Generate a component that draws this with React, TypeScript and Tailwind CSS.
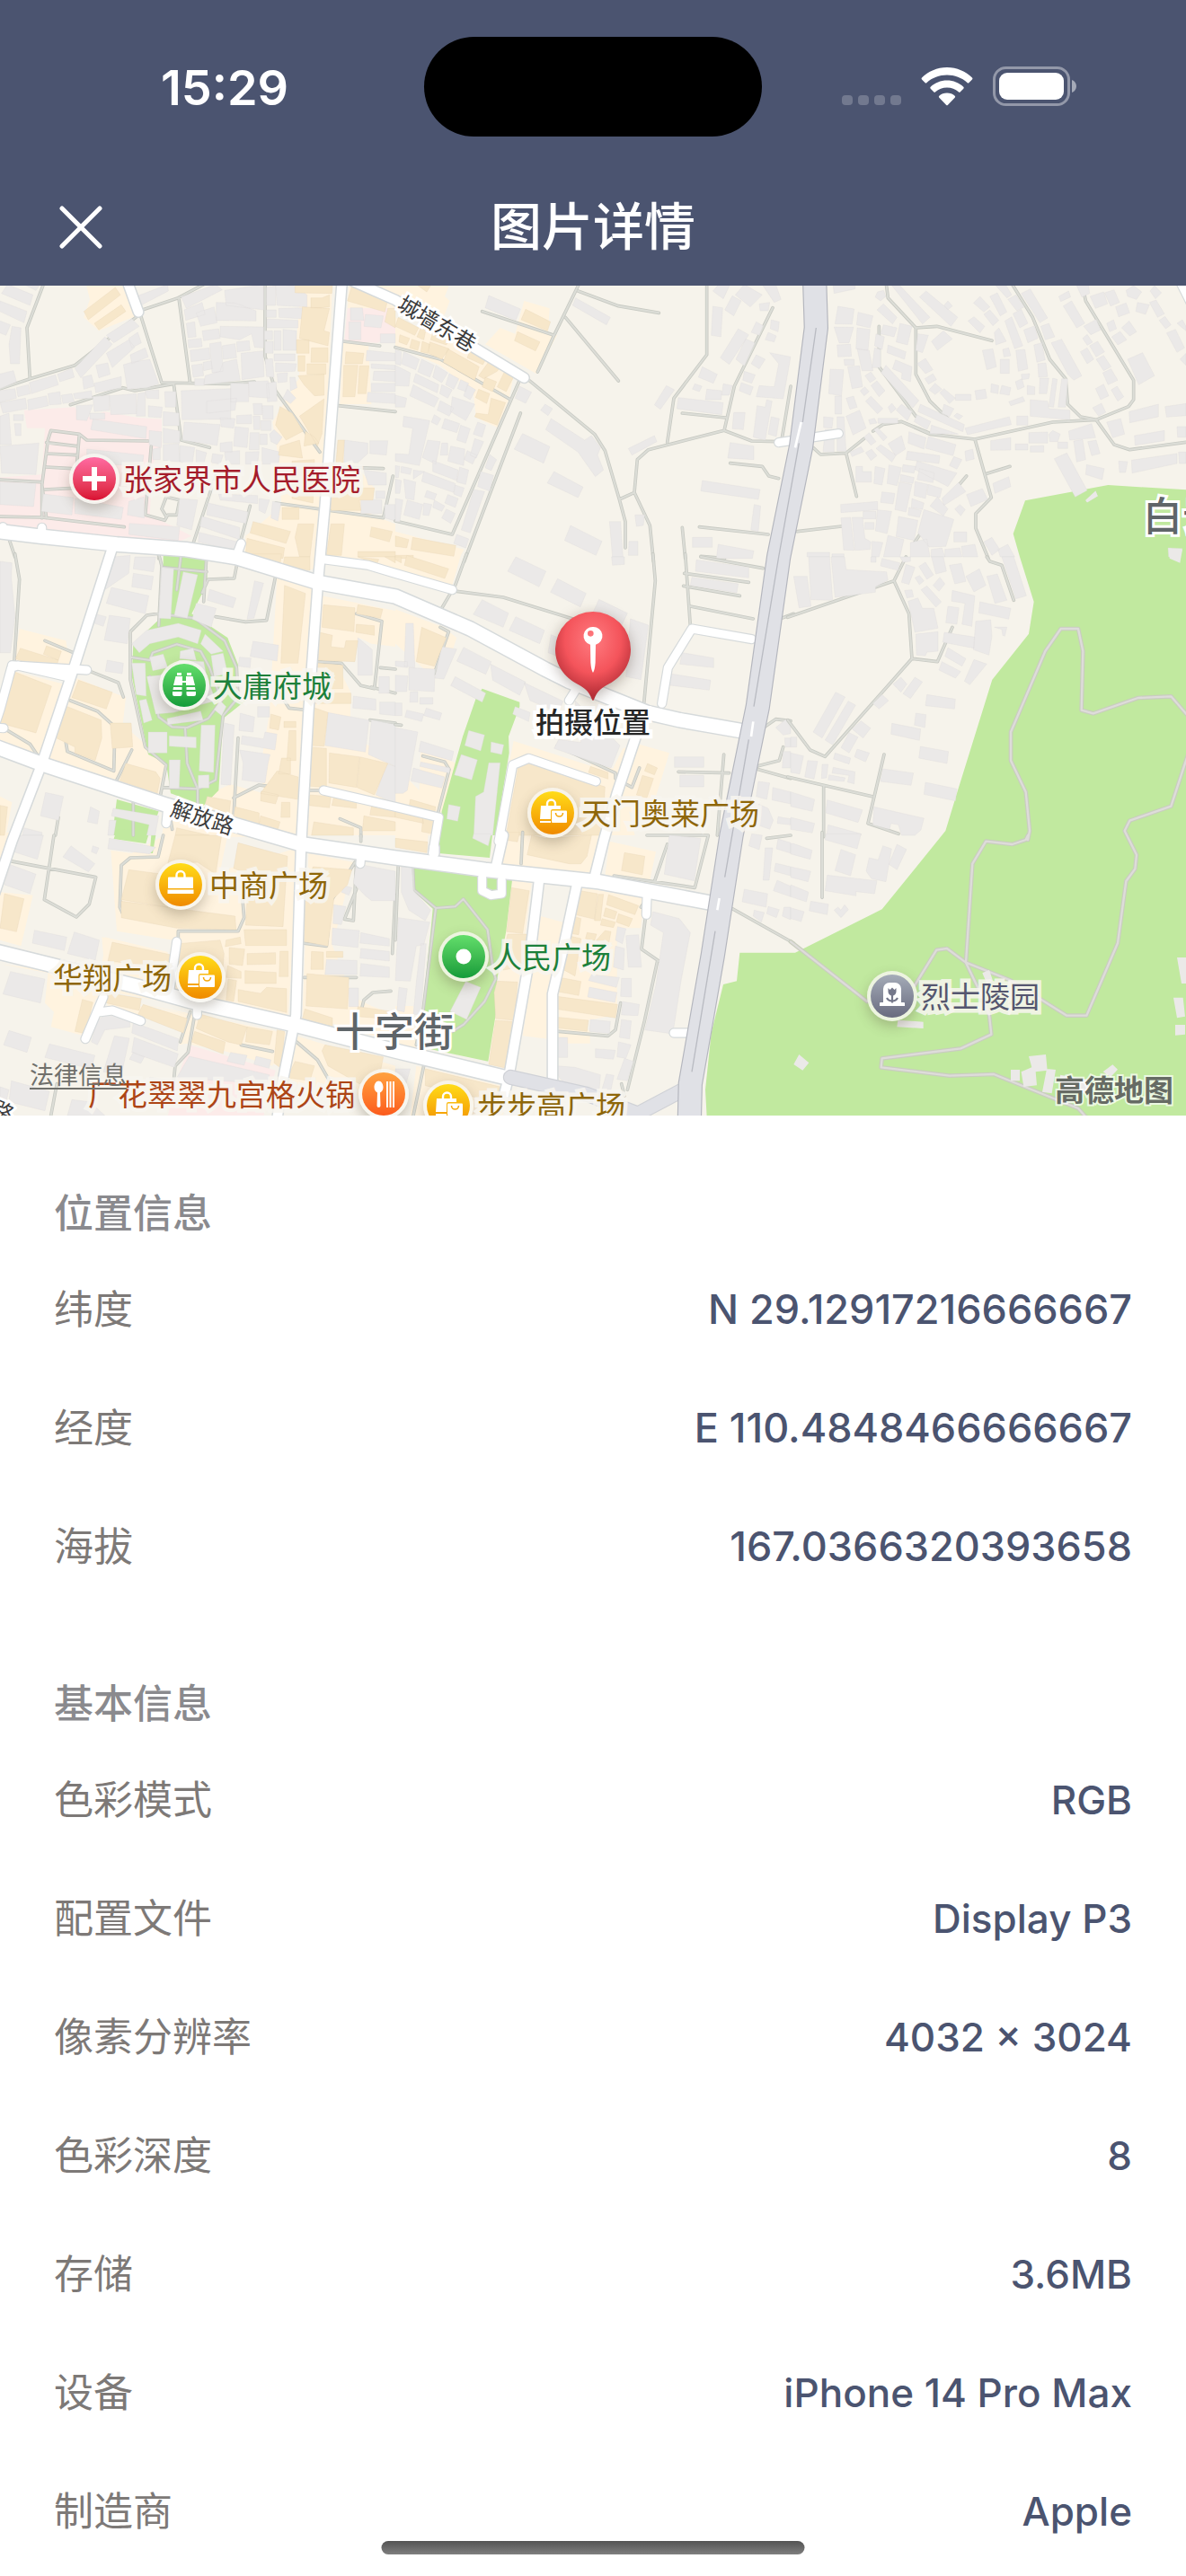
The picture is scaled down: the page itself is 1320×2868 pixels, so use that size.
import type { ReactNode } from "react";

const sections = [
  {
    title: "位置信息",
    valueSize: "text-[45px]",
    rows: [
      ["纬度", "N 29.12917216666667"],
      ["经度", "E 110.4848466666667"],
      ["海拔", "167.0366320393658"],
    ],
  },
  {
    title: "基本信息",
    valueSize: "text-[44px]",
    rows: [
      ["色彩模式", "RGB"],
      ["配置文件", "Display P3"],
      ["像素分辨率", "4032 × 3024"],
      ["色彩深度", "8"],
      ["存储", "3.6MB"],
      ["设备", "iPhone 14 Pro Max"],
      ["制造商", "Apple"],
    ],
  },
];

type Tile = {
  x: number;
  y: number;
  shops?: string;
  hospital?: string;
  park?: string;
  lanes: string;
  houses: string;
  stores?: string;
};

// the map is cut in nine tiles of 1320 x 930 units, each with its own origin
const tiles: Tile[] = [
  {
    x: 0,
    y: 0,
    shops:
      "M985,10H1110L1075,930H815L820,860 940,760 930,600 910,480 1000,330 990,200 1000,100Z M1165,10H1320V100H1160Z M285,10H410L455,125 330,175 280,130 300,70Z M1145,215H1230L1240,420H1135Z M1130,540H1150L1180,620 1210,650 1250,700 1240,790 1320,820V930H1085Z",
    hospital:
      "M80,440 250,430 270,470 350,445 460,465 540,470 540,560 510,620 500,790 640,860 600,878 -10,835V665L140,655 150,500 90,500Z M1160,100H1320V185L1260,215 1150,210Z",
    lanes:
      "M145,20 90,165 100,335 M-10,372 100,335 250,290 460,125 M460,110 595,65 680,20 M470,125 540,348 M597,65 635,350 M540,348 760,352 850,345 M235,422 410,365 450,375 580,352 605,540 700,565 M885,20V260L920,375 1068,580 M1145,210 1268,225 M1130,425 1320,445 M155,800 140,690 160,540 170,508 265,520 290,540 495,543 M265,520 250,700 150,705 M155,548 255,560 M155,585 255,590 M155,630 240,635 M-10,672 135,680 M140,690V800 M-10,795 140,798 415,830 M505,560 485,790 550,808 560,790 590,790 600,740 555,730 540,770 555,795 M720,660 645,885 M835,760 805,870 M920,750 1280,800 1312,660 M1150,630 1280,635 M30,870 50,930 M530,920V935",
    houses:
      "M25,20 110,55 100,90 5,50Z M0,75 90,110 80,148 -5,108Z M80,20 130,25 120,40Z M-5,140 35,155 20,190 -5,180Z M40,160 70,165 65,285 35,285 30,220Z M-5,320 45,308 55,345 -5,370Z M-5,375 50,368 55,400 -5,415Z M55,365 95,355 102,385 60,395Z M98,348 185,322 195,355 105,385Z M192,320 240,300 248,330 200,345Z M0,415 85,400 90,435 10,450Z M92,405 155,392 162,425 95,440Z M160,385 200,378 205,420 165,422Z M205,390 240,385 248,412 210,418Z M250,300 350,195 375,220 270,332Z M355,190 440,135 465,160 380,215Z M355,250 430,205 450,230 375,298Z M430,200 460,180 472,215 440,232Z M435,255 485,232 495,262 440,285Z M320,290 360,282 368,320 330,332Z M275,330 305,322 315,360 280,370Z M315,350 405,328 405,365 320,382Z M245,385 305,375 308,400 250,402Z M412,288 440,280 500,270 530,352 490,365 425,370Z M310,395 365,390V440L315,445Z M365,392 455,385V452L370,455Z M460,385 485,380V460H455Z M485,375 530,372V402L490,400Z M495,425 542,430 538,465 495,462Z M255,425 310,422 290,475 255,472Z M550,378H587V430H552Z M545,445 598,450V492H545Z M545,500 600,510V550H545Z M310,470 490,495 487,535 303,505Z M300,450H350V470H300Z M498,508 540,512 538,565 498,555Z M545,555 597,552 600,612 545,608Z M600,558 650,565 642,620 600,612Z M605,375 770,368V470L608,472Z M690,410 790,400 785,440 690,450Z M770,350 830,352V412H770Z M830,345 895,342 900,400 832,395Z M845,418H875V455H848Z M875,425H912V470H878Z M790,458 840,455V485H790Z M845,460H868V505H848Z M870,475H905V508H872Z M735,465 785,468 780,500 738,495Z M615,480 735,488 725,558 610,540Z M785,495 830,500 825,565 780,560Z M835,515H865V572H832Z M868,520H892V555H868Z M900,520 915,505 942,530 925,555 905,545Z M735,550 775,545V580L735,578Z M450,62 560,20 562,42 460,95Z M605,62 720,20 742,38 622,100Z M615,105 675,80 685,120 620,140Z M655,115 715,95 725,148 670,160Z M750,40 880,20V105L755,90Z M722,80 785,82 855,108V142L722,140Z M622,150 650,145 655,195 628,198Z M628,205 672,200 675,228 630,232Z M675,175 730,168 735,200 680,208Z M735,160 880,162V232L850,230 840,185 800,205 735,195Z M635,240 698,232 702,270 638,278Z M700,218 738,212 745,310 708,315Z M742,225 785,218 790,265 745,270Z M790,212 832,208 835,240 792,245Z M805,250 878,242 882,328 808,338Z M640,290 675,285 680,325 645,330Z M678,280 705,275 710,302 680,308Z M745,280 790,270 802,340 680,355 685,325 735,310Z M650,335H682V358H650Z M890,30 920,25V90H890Z M920,20 980,25 1025,55V95L925,90Z M930,100 1010,98V135L932,130Z M890,105H922V130H890Z M892,135 995,140V165H892Z M883,175H910V205H883Z M915,175H938V240H915Z M945,170 990,175V240H945Z M885,210H912V250H885Z M915,252H985V275H915Z M885,270 910,268 915,330 890,328Z M920,282 990,285 985,310 920,312Z M925,318 960,315 958,345 928,348Z M968,330H985L992,365 970,375Z M890,350 922,345 925,410 893,412Z M960,370 988,400 970,418 945,400Z M290,570 480,590 475,625 380,622 290,600Z M0,560 130,550 120,655 5,650Z M0,460 30,450 38,555 0,555Z M48,485H70V525H52Z M45,455H78V475H45Z M0,680 120,685 112,762 0,755Z M145,720 245,732 240,790 138,778Z M250,735 412,765 405,805 250,785Z M430,745 480,730 482,800 425,790Z M432,818 600,830 595,875 430,855Z M600,735 660,740 640,840 590,825Z M510,570 535,565V605H510Z M655,572 690,582 680,620 655,615Z M710,585 745,590 735,620 705,615Z M750,580 800,575V620H755Z M820,580 865,578 860,620H820Z M875,565 935,580 930,620H875Z M695,750 828,780 820,818 690,790Z M675,795 800,832 800,872 668,828Z M665,848 795,880 790,910 662,880Z M730,720 860,725V752L735,740Z M865,735 900,740 885,785 865,775Z M910,745 938,750 928,810 905,800Z M1170,98H1210L1215,140H1170Z M1220,120 1280,125 1272,165 1215,160Z M1165,145H1205V205H1165Z M1270,185H1320V215H1270Z M1225,240 1320,250V275H1222Z M1240,285 1320,290V305L1240,300Z M1248,310H1320V345L1245,340Z M1240,350H1320V378H1240Z M1228,380 1320,385V418L1225,412Z M1150,540 1228,550V585L1195,615H1148Z M1235,542H1295L1290,590 1235,585Z M1215,640 1290,650V690L1230,690Z M1205,735 1275,740V785H1205Z M1255,710H1285V735H1255Z M1285,755H1320V810L1285,800Z",
    stores:
      "M985,20 1110,24 1108,50 985,48Z M1038,65H1075L1100,55V95L1070,98H1038Z M1010,95 1100,100 1082,175 1100,180 1095,225 1000,200Z M990,205H1032V250H990Z M1040,232H1095V280H1038Z M995,258H1018V310H995Z M1025,285H1088V320H1025Z M995,325 1082,320V390L1050,392 1015,355Z M1000,460 1082,402 1075,520 1060,560Z M935,428 975,450 1012,510 955,540 920,490Z M1020,510 1050,530 1065,550 1015,560Z M935,560 1000,540 1010,600 930,590Z M280,110 385,30 402,55 295,138Z M315,150 405,88 420,110 330,172Z M1175,24 1295,70 1285,112 1160,75Z M1295,100H1320V165L1285,145Z M1155,245 1215,250 1210,285H1152Z M1148,290H1195L1185,395H1145Z M1200,292H1232L1222,385H1195Z M1128,540H1150L1145,615H1122Z M1180,700H1250L1245,740H1200L1205,775H1105V730Z M975,610 1050,605 1045,750 975,735Z M942,765H998V805H942Z M845,812 970,845 955,885 835,850Z M825,868 950,900 945,935 820,920Z M995,820H1048L1035,930H1000L985,865Z M1105,820H1150L1140,925H1090Z M1240,830 1310,845 1300,880 1235,862Z M1195,912H1320V930H1195Z",
  },
  {
    x: 1320,
    y: 0,
    shops:
      "M0,10H185L165,60 182,75 165,120 100,140 0,70Z M430,75 515,100 510,180 540,190 470,318 300,220 350,165 400,185Z M0,130 300,260 400,300 380,400 345,500 270,465 260,380 150,290 0,225Z M0,845 230,905 215,930H0Z",
    lanes:
      "M615,15 530,190 475,312 M610,42 745,92 880,115 M568,130 745,342 M290,110 530,190 M1040,10V255L930,400 908,548 M440,335 665,520 700,575 748,738 768,812V900 M748,738 798,715 808,605 845,572 1098,508 1190,543 1280,545 M798,715 850,825 862,945 M1260,98 1132,360 1098,508 M958,450 1102,465 M1118,617 1225,628 1247,660 1280,668 M1015,830 1245,855 M958,832 968,935 M415,340 190,855 0,810 M418,450 230,945 M0,230 150,270 385,405 M1020,928 1100,935 M1320,360 1290,540",
    houses:
      "M312,57 418,102 402,140 300,98Z M602,65 718,130 705,155 592,90Z M1060,93 1093,98 1087,195 1055,190Z M1125,58 1155,75 1130,125 1100,105Z M1165,20 1225,55 1185,95 1135,55Z M1085,15H1120L1095,68 1060,42Z M1225,20H1270L1288,70 1265,80Z M1215,85 1250,80 1245,108H1218Z M1145,168 1180,188 1115,287 1085,265Z M1170,202 1200,215 1165,292 1137,270Z M1205,145 1228,158 1215,190 1188,180Z M1255,138 1282,145 1278,178 1252,168Z M1245,180 1272,192 1265,212 1235,205Z M1205,255 1235,270 1215,302 1188,285Z M1250,248 1320,262 1295,402 1205,395 1215,358 1265,362 1280,285Z M1165,310 1202,322 1190,350 1160,340Z M1155,348 1195,362 1185,390 1148,375Z M1025,295 1075,320 1062,350 1012,330Z M905,358 932,372 885,437 865,422Z M1000,352 1024,360 1015,378 992,370Z M945,398 1095,415 1090,455 940,435Z M1040,370 1090,375 1088,405H1035Z M1095,352 1125,358 1115,390H1090Z M1130,448H1168L1162,505 1125,502Z M1208,425 1235,430 1240,405 1258,410 1235,540 1195,530Z M1255,462 1282,468 1272,528 1245,520Z M865,525 873,545 790,590 778,568Z M520,468 632,540 655,525 685,565 675,590 695,640 668,662 610,580 502,505Z M425,518 516,562 495,617 397,570Z M530,645 627,697 610,732 507,683Z M585,825 690,878 670,925 565,875Z M715,812H752L760,930H725Z M780,878H810V925H778Z M800,790H832L828,825 805,828Z M1118,548 1197,560V605L1110,600Z M1025,675 1218,705 1212,738 1020,710Z M1198,755 1220,760 1212,845 1187,840Z M992,865H1058V898H992Z M1078,888 1197,910 1192,935H1072Z M415,360 455,380 435,417 400,400Z M500,420 525,435 510,458 485,440Z M0,238 20,245 18,290 0,285Z M28,245 80,270 68,305 20,285Z M88,270 130,290 115,330 75,312Z M135,290 175,315 155,348 125,330Z M180,318 212,335 195,370 168,355Z M0,290 50,315 45,360 0,358Z M68,318 145,355 140,382 60,345Z M60,355 145,400 130,430 48,392Z M155,355 190,372 175,400 148,385Z M218,338 245,350 235,378 208,368Z M240,355 268,372 250,405 228,392Z M190,395 265,420 235,475 185,445Z M150,408 195,432 180,460 140,440Z M0,390 38,400 32,430 0,430Z M28,460 115,475 80,625 0,610V585L45,588 58,500 25,495Z M130,455 152,468 140,490 120,480Z M165,468 215,485 205,515 155,500Z M218,490 250,502 235,550 205,540Z M108,540 150,545 135,620 90,598Z M155,550H175V590H150Z M185,560 232,570 228,625 175,610Z M275,480 302,490 290,530 260,520Z M265,535 295,545 270,600 250,590Z M240,575 272,590 258,620 230,605Z M125,608 210,640 205,675 125,645Z M215,630 245,640 235,688 205,680Z M95,645 200,685 195,715 88,678Z M60,640 98,645 60,670Z M20,628 55,635 50,655 18,648Z M0,625 15,628 10,665H0Z M0,670 20,675 15,718H0Z M28,670 68,680 62,740 35,735Z M200,690 230,700 220,730 195,720Z M105,708 138,720 130,740 98,730Z M175,722 210,735 200,765 165,750Z M0,735 25,740 15,812H0Z M40,740 92,755 80,805 28,790Z M95,750 122,755 112,792 92,790Z M130,740 165,760 155,778 125,765Z M170,770 200,785 185,818 155,800Z M315,588 338,605 320,642 300,632Z M285,645 328,658 315,710 275,695Z M262,705 298,712 250,850 220,840Z M205,855 245,870 235,900 195,885Z",
    stores:
      "M435,103 518,145 508,175 420,138Z M408,178 483,212 468,242 398,208Z M70,20H120L105,45Z M175,235 280,295 265,340 160,280Z M370,300 402,315 370,378 340,362Z M320,400 368,415 340,490 265,462 270,450 310,455Z M278,370 315,385 305,418 268,398Z M300,330 338,345 325,378 290,362Z M318,270 355,288 340,310 295,335 278,325Z M115,212 180,235 155,270 110,250Z M10,130 78,165 65,190 0,160Z M85,165 102,172 95,205 72,195Z M55,203 82,212 75,240 48,232Z M15,188 48,200 38,222 12,212Z M90,210 115,220 108,250 85,245Z M125,180 180,208 170,222 118,205Z M248,245 302,270 292,288 240,265Z M0,860 45,872 38,900 0,895Z M58,865 202,892 195,928 52,905Z M0,925H60V935H0Z",
  },
  {
    x: 2640,
    y: 0,
    lanes:
      "M318,10 325,65 418,165 488,160 672,208 M418,165V320L465,410 525,468 M740,20 808,130 865,270 918,335 925,420 968,462 1020,472 1128,428 1145,405V340L985,75 980,50 M75,565 100,588 185,583 245,535 M185,583 220,728 M275,510 310,487 370,478 465,520 615,537 875,480 1020,472 1080,555 1132,572 1320,547 M615,537 670,732 618,785V835L660,935 M655,652 732,628 M295,160V295L418,460 M560,692 587,660 M22,845 170,828 M415,880 438,845 M370,478 460,515",
    houses:
      "M142,24H215V35L145,50Z M290,45 310,40 318,60 300,75 282,62Z M158,93 212,102 205,153 148,152Z M225,113 275,125 265,165 220,155Z M145,162 210,163 195,215 162,215Z M222,165 265,170 258,240 218,235Z M155,222 200,220 203,260 158,262Z M222,235 262,240 275,308 238,308Z M178,270H212V290H180Z M190,295 230,292 240,362 205,368Z M132,303 177,305 170,392 127,385Z M148,393H170V453H148Z M185,400 210,393 222,430 198,437Z M110,462 142,465 138,500 110,498Z M155,462H178L185,577H155Z M115,505H145V580H108Z M185,460 230,440 252,500 208,523Z M310,85 355,130 340,152 288,105Z M310,155 355,165 345,195 300,185Z M365,150 405,160 390,222 352,212Z M285,185 313,195 305,238 280,225Z M280,232 300,238V298H272Z M325,222 385,245 380,270 322,248Z M350,272 405,295 400,345 370,335 372,315 340,302Z M248,325 268,312 285,335 265,348Z M268,358 288,342 315,375 295,395Z M232,375 248,362 262,378 245,392Z M250,410 268,393 308,435 290,452Z M318,290 428,408 408,432 302,315Z M338,24H365L465,130 440,152Z M452,42 558,130 535,160 430,62Z M512,90 525,75 540,92 525,105Z M610,82 632,60 665,95 645,112Z M592,142 612,128 648,160 632,182Z M645,120 665,105 695,140 675,158Z M665,60 690,48 722,112 700,125Z M685,24H720L738,55 722,65Z M725,70 752,55 780,95 755,108Z M770,50 800,35 858,132 832,148Z M742,118 770,103 792,150 765,165Z M715,142 738,128 775,225 748,235Z M778,172 815,158 825,200 792,215Z M835,160 862,150 882,195 850,205Z M425,185 460,190 440,248 418,240Z M470,210 510,175 540,202 490,240Z M680,180 695,165 720,210 685,222Z M640,240 675,235 687,295 655,305Z M708,237 728,232 735,258 712,262Z M700,270H730V317H700Z M752,240 782,237 792,302 760,310Z M812,222 838,215 850,272 822,280Z M825,285 852,282 858,328 828,330Z M770,320 798,318 795,335 772,338Z M750,345 772,335 780,362 758,372Z M670,352 695,358 692,385 668,380Z M705,357 735,365 730,390 698,385Z M615,375 650,370 655,400 620,405Z M550,387H602V407H550Z M790,357 815,362V388H790Z M832,333H862L855,385H830Z M728,412 775,395 782,410 735,425Z M800,405 858,410 862,435 932,440V472L855,465 800,460Z M875,333 890,337 878,430 862,428Z M905,335H925L918,430H893Z M870,215 905,203 972,325 945,340 925,320Z M422,285 450,267 475,305 450,318Z M448,335 475,318 487,338 460,353Z M462,372 482,350 505,370 482,388Z M498,382 512,368 550,400 530,418Z M433,420 580,488 575,512 425,445Z M512,420 545,435 530,462 505,450Z M325,430 338,417 352,435 335,450Z M352,440 370,420 405,445 390,475Z M412,478 422,455 468,478 455,505Z M470,490 560,520 465,518Z M582,500 730,462 737,488 590,522Z M545,460 555,450 575,460 562,472Z M755,460H792V490H755Z M292,467H358V484H292Z M260,472 280,467 288,483 265,487Z M278,505 290,498 322,530 310,543Z M245,530 262,515 285,545 268,557Z M325,552 370,525 383,570 350,592Z M395,512 452,532 445,570 392,550Z M460,528 552,555 542,592 450,567Z M250,582 270,570 288,592 268,608Z M285,568 300,555 352,590 338,613Z M198,580 235,562 245,578 205,595Z M390,577 498,592 495,618 385,605Z M668,542 735,532V573L668,574Z M795,515 858,513V550H795Z M750,553H792V573H750Z M862,520 875,508 900,520 892,545 865,545Z M800,560 845,558V580H800Z M892,547H925V568H892Z M928,510 1005,485 1018,532 932,540Z M945,543 975,538 985,605 955,613Z M992,545 1020,540 1033,585 1005,592Z M880,602 922,583 990,708 950,730Z M985,740 1018,710 1025,727 990,748Z M988,622 1047,635 1040,672 985,655Z M218,628H240V645H270V680H218Z M282,628 315,635 305,690 278,685Z M328,623 370,632 355,692 322,685Z M375,622 418,628 412,650 372,645Z M422,610 555,650 525,695 415,638Z M430,635 480,650 475,682 422,672Z M368,655 412,665 408,685 365,678Z M362,680 405,688 385,780 348,772Z M415,678 458,688 450,735 412,725Z M460,688 505,702 498,732 455,722Z M582,577 608,570 613,603 585,610Z M545,595 572,605 555,637 530,625Z M505,735 560,682 585,712 512,758Z M587,722 640,702 658,738 602,762Z M675,685 728,662 735,695 682,718Z M465,760 490,730 525,770 510,793Z M548,770 565,755 583,772 568,793Z M405,735 445,750 440,772 403,765Z M395,765 437,775 430,798 392,790Z M305,713 348,718 342,753 300,748Z M167,755 290,745V773L168,782Z M290,773 337,778 322,852 283,843Z M242,778H285V803H242Z M248,815H278V838H248Z M360,795 425,808 412,875 352,862Z M445,772 545,805 518,895 462,897 425,850Z M168,800 200,798 212,908 177,907Z M205,798H240L248,868 268,880 265,905 215,908Z M545,847H588V880H545Z M325,858 378,872 365,930H310Z M400,882 455,870 465,930H400Z M470,905 505,900 515,930H468Z M515,905 565,900 572,930H515Z M570,895 615,888 625,930H575Z M645,880 672,865 698,905 672,925Z M692,905 725,888 748,930H700Z M272,878 308,882 295,930H270Z M55,915H130V930H55Z M138,920H178V930H138Z M895,60 928,42 935,62 902,77Z M910,92 938,75 982,150 955,165Z M955,24H995L998,50 972,62Z M1000,60 1045,45 1058,85 1018,100Z M1048,48 1080,38 1098,80 1068,92Z M1085,95 1120,82 1132,115 1095,128Z M1120,40 1145,24 1172,45 1155,70 1125,60Z M1158,80 1198,88 1185,120 1152,110Z M1198,80 1220,72 1248,118 1225,130Z M1200,42 1215,24 1238,48 1218,68Z M1230,140 1250,127 1270,155 1252,168Z M1255,182 1285,170 1315,232 1290,247Z M978,160 1020,137 1035,172 1002,188Z M1055,150 1078,138 1088,168 1065,178Z M1105,165 1130,142 1155,178 1132,192Z M1072,195 1100,177 1122,205 1092,222Z M975,200 990,187 1008,213 990,223Z M998,225 1025,210 1048,245 1020,262Z M967,245 990,232 1012,270 990,285Z M1020,270 1045,257 1070,295 1045,308Z M1042,315 1070,302 1092,340 1060,355Z M1018,368 1045,353 1062,392 1035,405Z M1070,372 1090,360 1112,395 1092,410Z M1008,432 1038,417 1052,447 1028,460Z M1125,270 1175,248 1215,325 1162,355Z M1130,445 1228,420V462L1132,482Z M1250,428 1320,418V458L1255,463Z M1055,480 1102,468 1115,520 1075,532Z M1148,525 1248,508V542L1150,557Z M1290,495H1320V530H1292Z M1095,610 1125,612 1118,648H1098Z M1138,607 1290,585V618L1140,650Z M1295,580H1320V618H1298Z M1290,150 1308,138 1320,160V175Z M1300,270 1320,250V290Z M1260,900 1308,902 1300,930H1262Z",
  },
  {
    x: 0,
    y: 930,
    shops:
      "M65,240 220,280 225,310 240,330 215,400 45,360Z M40,380 215,425 140,670 0,615V520Z M255,405 420,470 410,560 560,690 530,800 375,745 165,675Z M925,65 1045,95 1010,930H690L700,790 770,760 880,790 870,700 900,520Z M1075,130 1320,180V300L1240,290 1200,270 1130,370 1170,450 1170,600 1020,520Z M1035,520 1320,680V930H1025Z M550,870 1000,935H540Z M0,800 40,820 20,930H0Z M700,-10 950,60 1050,40 1060,-10Z M1100,-10H1320V40Z",
    park:
      "M545,-10H690L692,90 640,190 760,270 795,360 790,470 820,480 745,540 730,780 680,830 570,790 555,690 495,660 470,540 440,400 445,290 530,210 545,20Z M390,810 530,850 500,930H375Z",
    lanes:
      "M530,-10 540,30 530,230 M540,35 690,50 M605,-10 590,110 M690,-10 680,150 M790,30 782,72 695,75 675,120 M435,335V250L490,195 540,188 570,195 650,205 750,280 790,370 795,470 745,530 720,745 660,775 545,770 M435,335V410L485,635 555,695 535,800 M435,335 500,345 510,320 590,292 670,315 700,370 740,480 695,540 625,570 575,568 530,535 500,400 M618,570 625,690 660,775V830 M150,280 245,320 M295,380 395,420 412,468 M50,-10 65,75 48,345 M235,480 325,515 375,560 M220,620 225,650 380,715 382,640 M440,645 390,745 M0,565 100,625 130,670 M720,200 820,217 890,212 920,65 M1190,190 1275,215 1250,440 1205,430 1140,355 1060,350 M1320,375 1270,370 M1240,435 1320,455 M930,450 965,505 1010,510 M795,605 780,870 M780,805 865,762 925,770 M1030,780H1080 M1135,875 1205,905V935 M445,820V930 M195,870 185,930 M575,910 570,880 M1235,545 1320,555",
    houses:
      "M0,15 40,20 38,70 50,200 35,320 0,320Z M380,0 435,-5 430,55 350,110Z M450,0H520L512,50 445,40Z M445,55 512,65 505,110 440,100Z M372,102 497,130 485,190 355,155Z M365,195 435,205 425,290 348,278Z M315,190 355,200 345,232 310,220Z M358,345 412,355 408,390 352,382Z M540,35 580,40 570,207 530,205Z M612,50 660,60 625,205 582,195Z M655,155 722,172 705,235 642,208Z M440,290 490,245 595,222 672,245 660,290 595,268 500,290 465,320Z M670,290 685,258 745,315 705,325Z M705,330 745,322 760,390 715,400Z M602,315 645,305 655,345 600,340Z M500,335 545,325 560,370 510,380Z M440,355 485,355 488,465 455,460Z M490,400 535,395 600,345 680,350 690,400 720,480 580,520 520,525Z M465,480 488,475 508,545 480,555Z M558,540 670,515 678,545 560,560Z M715,510 735,480 755,500 740,530Z M495,585H558V655H495Z M565,598 655,602V638L565,632Z M672,562 718,562 713,720 665,715Z M565,678H602L598,773H565Z M662,730 698,728V772H662Z M748,555 782,562 770,762 738,760Z M590,810 600,800 625,830Z M700,108 788,138 778,170 692,145Z M850,80 880,88 848,205 825,208Z M845,282 930,295 925,348 835,332Z M800,335 838,338 835,370 795,365Z M802,522 850,535 845,585 798,580Z M860,500H900V535H860Z M885,585 925,592 918,645 805,625 808,598 880,608Z M800,645 902,660 895,690 885,755 808,745 812,690Z M1195,270 1243,310V395H1195Z M1265,400H1300V455H1265Z M1180,465 1255,475V512L1178,505Z M1268,485H1320V530L1268,525Z M1095,520 1232,545 1220,652 1085,630Z M1240,545 1320,560V700L1230,660Z M1290,690 1320,700V825L1255,795Z M152,787 212,800 195,880 135,865Z M302,835 332,850 325,892 292,885Z M378,840 530,865 518,930H490L498,895 372,865Z M365,880H388L380,930H360Z M80,905 140,920V930H75Z",
    stores:
      "M68,305 195,345 180,390 52,340Z M155,297 205,315 195,345 145,325Z M50,385 172,432 120,588 0,555Z M262,412 375,452 355,508 240,470Z M212,495 338,545 340,605 318,680 250,655V635L178,600Z M368,555H438L443,635 375,640Z M420,690 520,718 535,740 525,790 400,748Z M950,95 1020,122 995,355H938Z M1080,160 1185,170 1182,250 1075,235Z M1195,160 1278,175 1270,205 1190,190Z M1190,225 1250,230V262L1188,252Z M1058,250 1110,262 1105,300 1150,305 1155,280 1195,280 1185,350 1058,345Z M1060,355 1145,362V440H1060Z M905,525 938,535 930,578 900,572Z M948,550H988V570H948Z M965,580H988V680H958Z M940,672H970V725H930Z M925,715 995,735V810L870,790Z M940,820H968V870H938Z M872,782 930,795 920,825 870,815Z M692,800 770,815 765,860 685,825Z M785,835 865,855V895L780,875Z M870,865 935,885 928,910 865,895Z M1045,455H1172V490H1040Z M1038,500 1095,520 1082,632 1035,630Z M1035,635 1090,640V770L1025,765Z M1100,655 1200,668 1190,770 1098,755Z M1202,668 1295,690 1250,795 1192,770Z M1115,800 1190,812V840L1108,830Z M1030,795 1105,800 1100,838 1030,830Z M1048,885 1180,905V930H1040Z M1240,835 1320,845V870L1235,862Z M1215,865 1320,885V915H1210Z M0,830 25,835 15,930H0Z M590,905 700,930H585Z M950,0H1035V45L945,30Z M830,-10H940L935,28Z M1195,0 1265,8 1258,25Z M1285,0H1320V20Z",
  },
  {
    x: 1320,
    y: 930,
    shops:
      "M0,-10H220L190,95 0,40Z M0,175 160,235 205,270 185,330 120,395 0,290Z M395,615 720,720 760,640 810,625 915,655 870,800 820,870 780,850 800,930H370L380,690Z M85,640 205,690 150,865 0,830V700L80,780Z M0,840 140,870V930H0Z M650,690 740,710 700,790Z",
    park: "M290,440 415,485 415,500 378,600 380,655 335,930H150L155,850 225,600 270,470Z",
    lanes:
      "M238,-10 200,95 150,180 M205,115 360,135 595,208 660,235 M860,-10 868,80 830,490 M968,-10 985,230 M965,55 1180,85 M962,97 1150,130 M985,165 1195,207 M1020,0 1228,38 M150,235 178,250 130,390 M540,632 735,722 735,740 790,770 815,705 M92,665 165,685 180,710 140,865 M945,718 1115,722 M1097,660 1075,930 M1290,205 1330,190 M1230,570 1270,542 1320,548 M1205,700 1282,680 1295,635 M1205,708 1320,740 M415,905 480,910 M0,560 20,562",
    houses:
      "M402,0 503,48 480,100 375,48Z M542,73 637,122 618,167 518,118Z M680,142 775,188 755,230 660,185Z M290,143 378,188 360,235 260,192Z M402,200 498,245 482,290 380,245Z M520,260 590,290 590,350 510,320Z M785,207 845,228 820,410 770,400Z M722,0H765V25L725,28Z M1005,10 1180,35V70L1002,48Z M990,68 1145,90 1140,120 985,95Z M958,320 1063,338V370L950,358Z M918,390 1053,412 1048,445 910,428Z M932,668H1030V703H932Z M950,730H1030V768H950Z M35,222H60L65,370 30,365Z M155,300 205,308 162,408 132,405Z M228,302 320,350 302,392 205,348Z M318,358 435,418 415,462 325,412Z M430,420 560,482 545,520 450,480Z M200,400 302,455 290,485 185,430Z M0,348 40,350V370L0,365Z M45,370 132,375 130,450 45,445Z M0,395 42,398 38,450H0Z M50,450H75V485H48Z M82,470H125V492H82Z M0,488H22V530H0Z M38,512 95,525 88,550 32,535Z M103,505 155,522 148,545 95,530Z M0,570 75,585 40,780 25,790H0Z M85,615 195,650 188,680 78,650Z M60,705 165,735 155,772 52,748Z M85,685 182,705 180,722 82,700Z M400,500 450,520 445,550 392,525Z M600,480 750,630 720,705 530,640 545,610 620,620Z M245,580 298,595 285,648 232,630Z M320,618 362,628 355,660 318,652Z M220,660 274,678 255,745 197,728Z M312,688H350L325,930H262L268,800 295,785Z M178,827 217,835 208,883 172,875Z M1270,570 1305,542 1320,560V590L1295,595Z M1295,650H1320V705H1292Z M1300,605H1320V635H1302Z M1212,750 1250,755 1240,810 1205,800Z M1260,770 1320,785V825L1258,812Z M1278,868 1320,875V895L1275,890Z M1200,820 1245,840 1262,880 1250,910 1195,890Z",
    stores:
      "M38,-5 178,40 165,72 30,28Z M0,0H20V20L0,10Z M88,235 170,270 130,365 70,350Z M415,678 700,768 692,930H370Z M652,700 710,720V742L645,720Z M842,690 875,705 865,728 832,715Z M825,730 862,740 840,805 805,795Z M50,810 135,835 130,865 45,838Z M0,850 90,868 95,890 0,870Z M92,870 132,870 125,925 88,918Z",
  },
  {
    x: 2640,
    y: 930,
    lanes:
      "M-10,202 345,80 385,0 M345,80 395,190 405,340 490,350 540,235 M405,340 115,667 65,645 -10,545 M655,0 665,15 705,28 745,145 M-10,735 272,800 M312,660 258,890 360,925 M110,765V935",
    houses:
      "M10,65H55L68,165 28,170Z M60,0H130L140,145 68,143Z M135,0H180L185,42 228,45 320,50 325,78 283,100V118L190,130 148,135Z M305,5 365,20 358,45 300,30Z M365,0H400V15L375,18Z M268,0H285V18H268Z M385,25 415,35 395,92 370,85Z M428,32 450,18 477,60 455,75Z M470,0H510L520,48 485,57Z M415,70 430,62 445,80 430,93Z M380,112 405,110 410,133 388,137Z M475,95 498,68 515,90 495,115Z M435,110 455,97 503,150 485,168Z M530,28 570,22 585,82 548,90Z M585,65 630,40 652,95 612,117Z M655,65 690,57 722,145 682,155Z M705,0H745L787,130 752,140Z M632,150 735,172 728,208 628,187Z M540,112 615,130 605,232 572,225 582,155 537,148Z M525,165 562,170 555,225 518,220Z M392,148 425,137 440,172 478,172 492,238 415,252Z M418,258 492,250V315L455,318 450,330 420,328Z M513,252 615,268 612,305 508,285Z M618,215 668,210 672,265 662,328 610,310Z M680,235H722L715,265 708,262 705,242Z M525,303 585,340 572,365 515,332Z M505,350 568,383 550,405 495,378Z M612,343 655,358 598,427 580,415Z M415,402 440,418 400,473 375,457Z M342,425 368,402 388,425 368,452Z M275,490 305,460 327,480 295,508Z M150,452 182,468 105,605 75,585Z M192,482 217,495 140,628 115,612Z M455,460 550,475 547,508 450,497Z M338,556 434,575 430,613 335,592Z M418,522 452,527 448,570 413,562Z M433,633 527,650 522,690 428,672Z M450,753 555,775 550,815 445,793Z M308,708 410,722 402,763 300,750Z M205,575 235,548 267,572 242,605Z M195,587 225,602 195,655 168,637Z M148,655 200,672 195,692 143,675Z M222,642 263,655 250,685 213,668Z M0,602H20V635H0Z M0,655 43,665 30,725 0,720Z M57,680 90,683 78,742 47,735Z M105,693H125L120,738 103,740Z M142,703 215,718 212,758 190,752 195,730 138,722Z M128,728 182,738 178,750 125,745Z M122,812 240,845 225,887 117,855Z M0,785 80,810 72,850 0,833Z M0,870 80,890 72,922 0,910Z M278,835 445,873 435,912 415,930H370L360,895 335,890 330,910 275,895Z M125,895 235,925V930H120Z",
  },
  {
    x: 0,
    y: 1860,
    shops:
      "M0,190 110,200 70,370 0,350Z M370,50 440,60 550,0H760L735,120 1000,40 960,630 350,520 380,420 575,400 580,350 390,320Z M0,430 160,460 150,560 180,590 170,640 280,670 320,545 640,600 600,700 650,690 910,770 950,660 360,590 350,340 560,390 570,560 330,500 230,460Z M1030,60 1180,90 1110,370 1180,540 1240,570 1320,600V690L1010,600Z M990,670 1320,770V830L1200,870 940,820Z M0,-10H40L20,80 0,90Z M340,340 560,390 560,440 330,500 345,400Z M360,540 640,600 600,690 640,700 760,720 930,770 955,660Z",
    hospital: "M630,700 920,785 880,936H560L600,790Z",
    park: "M390,-20 500,-15 487,28 380,12Z M505,0H520L510,60H500Z",
    lanes:
      "M180,0 148,215 255,273 298,230 320,140 30,85 M545,0 528,72 435,75 405,100 400,240 410,262 M595,350V320H795L815,275 810,215 M1185,90 1105,220 1090,370 1010,360 M1190,180 1150,280 1180,285 1190,90 M1015,475H1190 M1205,590 1215,550 1245,525 1305,520 M1310,395 1320,200 M650,600 628,725 585,770 580,820 M635,590 602,690 M805,700 910,722 M990,690 1060,750 1100,820 M190,830 170,936 M1205,0V20",
    houses:
      "M60,0H145L125,80 45,55Z M237,35 317,95 295,122 210,72Z M310,35 330,42 322,62 305,55Z M35,98 120,130 100,195 15,165Z M365,10 520,40 500,62 360,45Z M115,317 223,340 215,385 108,360Z M248,323 332,350 318,418 225,395Z M35,455 150,480 135,560 10,530Z M30,652 105,675 90,725 12,700Z M165,697 317,735 305,780 150,742Z M350,600 430,605 435,640 350,650 325,700 305,690 325,620Z M445,625 597,680 592,720 440,660Z M382,670 432,678 405,800 345,790Z M448,675 595,730 582,775 440,725Z M445,725 482,740 470,762 432,748Z M38,820 165,855 150,920 30,890Z M0,840 30,850 20,892H0Z M240,883 300,890 350,936H225Z M770,725 825,735 815,768 758,755Z M855,738 905,750 898,778 848,765Z M632,738 900,800 890,830 590,810Z M408,475 472,488 465,525 400,510Z M500,808 590,820 580,850 490,840Z M1190,95 1320,120V218H1240L1218,200 1180,160Z M1110,310 1200,318 1195,375 1108,365Z M1205,325 1300,345V370L1202,360Z M1205,378 1300,388V420L1202,410Z M1090,415 1192,418V465H1085Z M1205,428 1300,440V475L1202,470Z M1165,510H1197V572H1165Z M1115,232 1155,238 1140,298 1112,295Z M1150,168 1175,175 1165,200 1140,190Z",
    stores:
      "M15,195 80,212 55,322 0,310Z M585,0H740L720,130 660,90 560,95Z M430,115 530,128 560,240 405,215Z M405,220 785,270 788,315 590,310 405,275Z M795,25 960,70 945,305 820,300 830,130 780,110Z M815,315H957V368H820Z M755,350 802,340 805,362 752,372Z M375,357 567,398 560,440 360,420Z M595,362 735,350 748,395 740,500 600,440Z M765,375 817,380 810,435 765,430Z M825,395 920,392V430L825,432Z M935,387H962V472H932Z M818,452 922,458V495H818Z M760,435 805,455V478L755,475Z M762,480 790,485 780,555 755,550Z M795,515 870,528 890,508 957,512V592L795,555Z M1045,105 1175,115 1160,165 1115,210 1095,370 1015,355 1020,180Z M1040,388 1080,390V448H1038Z M1090,388H1145V408H1090Z M1025,462 1165,475 1160,580 1022,570Z M1018,580 1110,610V640L1010,612Z M1195,572 1320,590V615L1190,605Z M1085,700 1280,740 1270,790 1200,830 1095,770 1075,720Z M985,755 1050,770 1035,820 960,810Z M668,597 825,640 805,700 760,690 655,645Z M650,655 752,690 745,730 640,690Z M825,640 910,655 900,700 820,690Z M925,650 950,655 940,780 915,760Z M478,565 625,612 612,660 460,600Z M350,525 472,545 465,585 355,560Z M275,548 310,558 285,662 250,655Z",
  },
  {
    x: 1320,
    y: 1860,
    shops:
      "M0,-10H110L105,60 0,40Z M370,-10H700L670,130 355,95Z M715,20 870,55 850,150 700,135Z M390,150 455,160 375,780 310,765 340,530 365,340Z M485,270 560,290 520,540 510,680 425,670Z M625,175 830,210 820,310 740,310 740,600 520,640 650,650V695H545V600L530,530Z M0,570 60,570 70,710 0,700Z M70,770 370,840 360,936H50Z",
    park:
      "M145,-10H325L315,75 145,60Z M60,105 390,150 370,320 340,480 335,600 310,755 120,715 200,640 90,590 120,300 125,245 60,185Z",
    lanes:
      "M10,95 0,350 M58,100 62,182 135,243 200,238 227,213 308,315 325,440 335,480 298,555 228,632 190,655 M135,243 92,590 70,700 M425,-10 420,95 M840,0 1045,0 1000,175 730,135 M865,155 908,30 M820,240 840,210 M835,275 822,380 880,420 M875,420 832,620 775,850 M545,655 710,670 735,650 752,560 M95,770 60,936 M755,830 765,870 M1125,245 1330,360 M1320,0 1240,10",
    houses:
      "M262,-5H320L310,35 258,10Z M20,105H55L60,185 118,250 100,285 45,250 20,190Z M10,275 115,290 95,365 70,370 50,487 0,485Z M85,362H103L85,595 60,600 70,490Z M12,508 40,512 30,590 5,585Z M235,488 285,508 238,615 183,588Z M915,0 1020,10 998,152 898,130Z M1190,-5 1225,0 1215,48 1180,35Z M1235,42H1260L1248,150H1228Z M1278,12 1320,25V60L1272,45Z M1270,93 1320,105V135L1265,120Z M1275,150 1320,170V205L1262,185Z M1165,180 1243,195 1238,240 1158,222Z M1198,250 1232,258 1222,290 1195,270Z M1245,238 1282,248 1272,275 1240,262Z M1298,240H1320V282L1292,270Z M860,255 948,278 985,325 955,480 930,640 918,662 833,650 870,500 895,325 852,300Z M742,305 770,312 758,362 735,350Z M770,335 812,332 822,440 778,440Z M735,370 765,378 762,450 728,440Z M655,465 748,475 738,508 645,485Z M755,478H788V540L752,538Z M648,507 740,525 733,558 642,540Z M758,555 815,565 810,602 755,600Z M652,615 718,622 715,662 648,655Z M755,615 788,620 782,680 748,675Z M535,675H575V742H535Z M668,713 735,718 728,748 668,742Z M745,690 787,700 770,745 740,740Z M765,745 795,755 775,820 740,815Z M540,770 600,775 685,800 680,860 580,850 545,805Z M705,797 730,802 720,850 690,848Z M0,780H50L30,850 0,840Z",
    stores:
      "M0,10 108,22 105,58 0,40Z M370,-10H415L408,22 365,15Z M455,0 500,10 655,0 640,70 620,95 580,95 440,65Z M765,58 833,70 825,132 755,118Z M388,175 447,185 425,328 372,322Z M618,185 675,195 665,280 600,265Z M678,197H695L685,285H665Z M712,198 812,235 800,265 705,232Z M702,242 740,255 732,280 695,270Z M745,262 792,278 780,305 738,290Z M690,278 735,290 728,308 685,300Z M600,272 620,278 612,332 585,328Z M375,330H438L420,440 360,450 358,400Z M340,487 408,490 398,618 335,612 330,525Z M335,618 390,622 372,778 312,765Z M565,332 620,345 600,470 545,440Z M550,475 620,488 612,535 542,522Z M540,538 742,565 735,610 535,580Z M518,605 645,618 640,655 515,640Z M640,325 672,330 665,352 635,345Z M700,318 720,322 712,365 670,352Z M100,780 350,840 330,890 100,836Z",
  },
  {
    x: 2640,
    y: 1860,
    lanes: "M105,-10V208",
    houses:
      "M118,-5H235L222,45 115,15Z M10,28 72,50 65,80 0,62V28Z M0,105 67,120 58,155 0,140Z M0,165 60,190 52,222 0,205Z M0,242 45,255 35,288 0,278Z M168,47 217,65 200,135 148,118Z M308,35 337,45 318,155 270,145 252,120 262,75 292,82Z M355,30 387,47 355,115 328,97Z M122,133 288,152 280,195 218,188V202L115,185Z M67,220 126,230 122,265 62,252Z M145,250 158,240 168,250 180,232 193,248 168,275Z",
  },
];

// footpaths and huts that lie on the big park in the east
const parkPaths =
  "M3432,1875 3438,1845 3425,1715 3375,1610V1515L3490,1245 3542,1170H3600L3616,1245 3611,1442 3650,1453 3800,1401 3910,1396 3970,1465 M3970,1580 3910,1763 3772,1811 3755,1845 3795,1925 3790,1972 3760,2013 3732,2220 3628,2462H3562L3375,2345 3225,2285 3162,2238 3127,2243 3055,2360 M3432,1860 3425,1875 3380,1890 3292,1880 3247,1955 3225,2285 3280,2400 3303,2460 3310,2525 3208,2572 2945,2605 2942,2635 3170,2663 3318,2658 3600,2772 3625,2800 M2640,2215 2895,2415";

const parkHuts =
  "M3280,2320 3303,2310 3315,2345 3295,2355Z M2998,2477 3083,2483V2505L2995,2500Z M2668,2592 2701,2620 2680,2645 2650,2625Z M3435,2598 3492,2592 3497,2645 3458,2650 3462,2695 3418,2700 3410,2650 3445,2635Z M3375,2643H3405V2680H3375Z M3495,2640 3525,2643 3512,2722 3480,2717Z M3540,2660 3630,2675 3640,2720 3540,2720Z M3683,2650 3715,2626 3732,2642 3708,2668Z M3930,2268H3960V2355H3945Z M3918,2402H3950L3957,2465 3930,2470Z M3924,2493H3957V2525L3924,2528Z M3922,795H3940L3938,825 3920,815Z M3903,902 3948,905 3940,950 3905,935Z M3625,742 3658,710 3665,727 3630,748Z";

const widePaths =
  "M-20,843 140,862 390,888 620,905 790,932 1060,1015 1320,1062 1570,1170 1820,1305 1900,1345 2160,1450 2270,1475 2470,1510 M-20,1562 140,1622 560,1760 1000,1888 1320,1935 1620,1975 2000,2015 2370,2085 M-20,2246 150,2288 460,2365 640,2415 980,2492 1320,2580 1700,2672";

const midPaths =
  "M1142,10 1085,760 1062,1010 1030,1450 1005,1900 988,2460 940,2700 925,2810 M1180,10 1320,72 1750,332 M375,900 250,1290 140,1620 40,1880 -20,2060 M2150,1450 2060,1720 2015,1880 1985,2000 M1800,2010 1770,2260 1700,2660 1680,2740 M1925,2030 1880,2240 1845,2390 1845,2680 M1450,1900V1920 M1680,1860 1655,1970 M425,10 462,112";

const slimPaths =
  "M1080,938 1230,958 1320,985 1510,1040 M2510,1205 2310,1170 2230,1300 2210,1420 M1665,1880 1712,1625 1765,1603 1990,1680 M1080,1710 1320,1765 1465,1800 1445,1920 M290,1308 40,1292 M220,1330 60,1293 38,1300 0,1440 -20,1500 M590,2215 565,2390 M658,2460V2420 M345,2400 285,2540 M335,2450 375,2445 470,2480 M555,1820 560,1770 M140,832V862 M10,830V848 M805,885 790,925 M2160,2070 2158,2125 M2250,2520H2310 M1610,2000V2045L1640,2060 1675,2055V2010 M1925,1370 1900,1410 M2600,548 2800,518 M1205,1930 1203,1955 M3940,10 3990,110 M12,1502 -20,1500";

const highway =
  "M2720,10 2725,165 2675,560 2600,930 2530,1430 2442,1860 2380,2260 2305,2690 2302,2810";

const highwayBranches = "M1705,2668 1960,2725 2130,2790 2300,2700";

function Lane({ d, wide, edge, fill }: { d: string; wide: number; edge: string; fill: string }) {
  return (
    <g fill="none" strokeLinecap="round" strokeLinejoin="round">
      <path d={d} stroke={edge} strokeWidth={wide + 7} />
      <path d={d} stroke={fill} strokeWidth={wide} />
    </g>
  );
}

function StreetMap() {
  const place = (tile: Tile) => `translate(${tile.x} ${tile.y})`;
  return (
    <svg
      viewBox="0 24 3960 2772"
      preserveAspectRatio="xMidYMid slice"
      className="block h-full w-full"
      aria-hidden="true"
    >
      <rect y="24" width="3960" height="2772" fill="#f6f3eb" />
      {tiles.map((tile, i) => (
        <g key={i} transform={place(tile)}>
          <path d={tile.shops} fill="#fff3df" />
          <path d={tile.hospital} fill="#fcebe9" />
          <path d={tile.park} fill="#c1e99f" />
        </g>
      ))}
      <path
        d="M3423,742 3700,690 3960,706V2800H2360L2355,2710 2375,2520 2415,2358 2460,2347 2470,2252H2655L2945,2107 3157,1845 3195,1720 3313,1340 3435,1187 3452,1080 3405,930 3383,853Z"
        fill="#c1e99f"
      />
      {tiles.map((tile, i) => (
        <g key={i} transform={place(tile)}>
          <g fill="none" strokeLinecap="round" strokeLinejoin="round">
            <path d={tile.lanes} stroke="#c8cac3" strokeWidth="11" />
            <path d={tile.lanes} stroke="#dcddd7" strokeWidth="6" />
          </g>
          <path d={tile.houses} fill="#ebe9e8" stroke="#dedcda" strokeWidth="1" />
          <path d={tile.stores} fill="#f7e7ca" stroke="#e6d5b7" strokeWidth="1" />
        </g>
      ))}
      <Lane d={parkPaths} wide={7} edge="#c9cdbf" fill="#dedcda" />
      <path d={parkHuts} fill="#ebe9e8" />
      <g fill="none" strokeLinecap="round" strokeLinejoin="round" stroke="#d6dadb">
        <path d={slimPaths} strokeWidth="34" />
        <path d={midPaths} strokeWidth="40" />
        <path d={widePaths} strokeWidth="55" />
      </g>
      <g fill="none" strokeLinecap="round" strokeLinejoin="round" stroke="#fff">
        <path d={slimPaths} strokeWidth="27" />
        <path d={midPaths} strokeWidth="31" />
        <path d={widePaths} strokeWidth="46" />
      </g>
      <Lane d={highwayBranches} wide={44} edge="#d0d2d7" fill="#e0e1e6" />
      <Lane d={highway} wide={75} edge="#b4b6be" fill="#e0e1e6" />
      <path
        d="M2725,165 2680,480 M2668,550 2600,930 2517,1430 M2500,1540 2420,2000 M2388,2180 2310,2650"
        fill="none"
        stroke="#b9bbc2"
        strokeWidth="4"
      />
      <path d="M2655,565 2675,480 M2508,1530 2515,1480 M2395,2110 2402,2070" stroke="#fff" strokeWidth="8" />
    </svg>
  );
}

const shoppingIcon = (
  <>
    <path d="M18 16v-2a4.500 4.500 0 0 1 9 0v2" fill="none" stroke="#fff" strokeWidth="2.400" />
    <path d="M11 16h22v4h-9a2 2 0 0 0-2 2v9H10z" fill="#fff" />
    <path d="M10 33h12v2H10z" fill="#fff" />
    <rect x="23" y="21.500" width="17" height="13.500" rx="1" fill="#fff" />
    <path d="M27.500 24a4 4 0 0 0 8 0" fill="none" stroke="#f5a80c" strokeWidth="1.600" />
  </>
);

const bagIcon = (
  <>
    <path d="M19.500 16v-2.500a4.500 4.500 0 0 1 9 0V16" fill="none" stroke="#fff" strokeWidth="2.400" />
    <path d="M11 15.500h26a1 1 0 0 1 1 1V28H10V16.500a1 1 0 0 1 1-1zM9.500 29.500h29V34h-29z" fill="#fff" />
  </>
);

type Place = {
  name: string;
  x: number;
  y: number;
  flip?: boolean;
  dot: string;
  text: string;
  icon: ReactNode;
};

const amber = "bg-linear-to-b from-[#ffdc18] to-[#ef8a00]";

const places: Place[] = [
  {
    name: "张家界市人民医院",
    x: 105,
    y: 533,
    dot: "bg-linear-to-b from-[#ff6aa2] to-[#d90c31]",
    text: "text-[#a51c2b]",
    icon: <path d="M21 11h6v10h10v6H27v10h-6V27H11v-6h10z" fill="#fff" />,
  },
  {
    name: "大庸府城",
    x: 205,
    y: 763,
    dot: "bg-linear-to-b from-[#62de6b] to-[#119c3a]",
    text: "text-[#1c803a]",
    icon: (
      <path
        d="M16 10h5v3h-5zM27 10h5v3h-5zM14.500 14h7.500v5h4v-5h7.500l2.500 10H26v-3h-4v3H12zM12 26h9.500v3H11.500zM26.500 26H36l.5 3h-10zM11 31h10.500v3a2 2 0 0 1-2 2H13a2 2 0 0 1-2-2zM26.500 31H37v3a2 2 0 0 1-2 2h-6.500a2 2 0 0 1-2-2z"
        fill="#fff"
      />
    ),
  },
  { name: "天门奥莱广场", x: 615, y: 905, dot: amber, text: "text-[#8e6609]", icon: shoppingIcon },
  { name: "中商广场", x: 201, y: 985, dot: amber, text: "text-[#8e6609]", icon: bagIcon },
  { name: "华翔广场", x: 223, y: 1088, flip: true, dot: amber, text: "text-[#8e6609]", icon: shoppingIcon },
  {
    name: "人民广场",
    x: 516,
    y: 1065,
    dot: "bg-linear-to-b from-[#62de6b] to-[#119c3a]",
    text: "text-[#1c803a]",
    icon: <circle cx="24" cy="24" r="8.500" fill="#fff" />,
  },
  {
    name: "烈士陵园",
    x: 993,
    y: 1109,
    dot: "bg-linear-to-b from-[#a5acb8] to-[#696b7f]",
    text: "text-[#55566f]",
    icon: (
      <>
        <path d="M14 31V16a7 7 0 0 1 7-7h6a7 7 0 0 1 7 7v15h3a1 1 0 0 1 1 1v3H10v-3a1 1 0 0 1 1-1z" fill="#fff" />
        <path d="M19.500 15l2 2 2.500-2.500 2.500 2.500 2-2v4a4.500 4.500 0 0 1-9 0z" fill="#74778a" />
        <path d="M24 22v9.500M24 29.500c-3 0-5-1.500-6-3.500M24 29.500c3 0 5-1.500 6-3.500" fill="none" stroke="#74778a" strokeWidth="2.200" />
      </>
    ),
  },
  {
    name: "厂花翠翠九宫格火锅",
    x: 427,
    y: 1218,
    flip: true,
    dot: "bg-linear-to-b from-[#ffa13f] to-[#fb5a1c]",
    text: "text-[#ad4516]",
    icon: (
      <path
        d="M18.500 9.500c3 0 5 3.500 5 7 0 3-1.500 5-3.500 6l.5 14.500a2 2 0 0 1-4 0L17 22.500c-2-1-3.500-3-3.500-6 0-3.500 2-7 5-7zM27 10h2v29h-2zM30.500 10h2v29h-2zM34 10h2v29h-2z"
        fill="#fff"
      />
    ),
  },
  { name: "步步高广场", x: 499, y: 1231, dot: amber, text: "text-[#8e6609]", icon: shoppingIcon },
];

// map positions are kept on a 1320 x 924 sheet that starts under the header
const leftOf = (x: number) => `${(x / 1320) * 100}%`;
const rightOf = (x: number) => `${((1320 - x) / 1320) * 100}%`;
const topOf = (y: number) => `${((y - 318) / 924) * 100}%`;

function PlaceMark({ place }: { place: Place }) {
  return (
    <div
      className={
        place.flip
          ? "absolute flex translate-x-7 -translate-y-1/2 flex-row-reverse items-center gap-1"
          : "absolute flex -translate-x-7 -translate-y-1/2 items-center gap-1"
      }
      style={{
        top: topOf(place.y),
        ...(place.flip ? { right: rightOf(place.x) } : { left: leftOf(place.x) }),
      }}
    >
      <div className="rounded-full bg-[#f8f6f0]/80 p-1 shadow-[0_6px_14px_rgba(90,80,60,0.3)]">
        <div className={`size-12 rounded-full ${place.dot}`}>
          <svg viewBox="0 0 48 48" className="size-12" aria-hidden="true">
            {place.icon}
          </svg>
        </div>
      </div>
      <span
        className={`pt-0.5 text-[33px] leading-12 whitespace-nowrap [paint-order:stroke] [-webkit-text-stroke:9px_rgb(248_246_240/0.85)] ${place.text}`}
      >
        {place.name}
      </span>
    </div>
  );
}

const streetNames = [
  { name: "城墙东巷", x: 486, y: 361, turn: "rotate-[31deg]" },
  { name: "解放路", x: 225, y: 911, turn: "rotate-[18deg]" },
  { name: "路", x: 3, y: 1238, turn: "rotate-[24deg]" },
];

const districts = [
  { name: "十字街", x: 373, y: 1149 },
  { name: "白云", x: 1272, y: 575 },
];

function MapPanel() {
  return (
    <div className="relative aspect-[1320/924] w-full overflow-hidden">
      <StreetMap />
      {streetNames.map((street) => (
        <span
          key={street.name}
          className={`absolute -translate-1/2 text-2xl leading-8 whitespace-nowrap text-[#3c3c3c] [paint-order:stroke] [-webkit-text-stroke:6px_#fff] ${street.turn}`}
          style={{ left: leftOf(street.x), top: topOf(street.y) }}
        >
          {street.name}
        </span>
      ))}
      {districts.map((district) => (
        <span
          key={district.name}
          className="absolute -translate-y-1/2 text-[44px] leading-12 font-medium whitespace-nowrap text-[#5f6569] [paint-order:stroke] [-webkit-text-stroke:6px_#fff]"
          style={{ left: leftOf(district.x), top: topOf(district.y) }}
        >
          {district.name}
        </span>
      ))}
      {places.map((place) => (
        <PlaceMark key={place.name} place={place} />
      ))}

      <div
        className="absolute flex -translate-x-1/2 flex-col items-center"
        style={{ left: leftOf(660), top: topOf(681) }}
      >
        <svg viewBox="0 0 252 300" className="h-[100px] w-[84px] drop-shadow-[0_4px_8px_rgba(60,40,30,0.35)]" aria-hidden="true">
          <defs>
            <radialGradient id="pin" cx="50%" cy="32%" r="62%">
              <stop offset="0" stopColor="#ff7b80" />
              <stop offset="0.600" stopColor="#f4545b" />
              <stop offset="1" stopColor="#b62f38" />
            </radialGradient>
          </defs>
          <path
            d="M126 0a126 126 0 0 1 126 126c0 52-31 93-72 115-27 14-40 25-50 51q-4 10-8 0c-10-26-23-37-50-51C31 219 0 178 0 126A126 126 0 0 1 126 0z"
            fill="url(#pin)"
          />
          <path
            d="M126 51a30 30 0 0 1 9 59l-1 60q-2 25-8 34-6-9-8-34l-1-60a30 30 0 0 1 9-59zM118 63a10 10 0 1 0 0 20 10 10 0 0 0 0-20z"
            fill="#fff"
            fillRule="evenodd"
          />
        </svg>
        <span className="text-[32px] leading-12 font-medium whitespace-nowrap text-[#262626] [paint-order:stroke] [-webkit-text-stroke:8px_#fff]">
          拍摄位置
        </span>
      </div>

      <a href="#legal" className="absolute bottom-6 left-[33px] text-[27px] leading-10 text-[#70706c] underline underline-offset-4">
        法律信息
      </a>
      <span className="absolute right-[14px] bottom-1 text-[33px] leading-12 font-bold text-[#666b64] [paint-order:stroke] [-webkit-text-stroke:4px_rgb(255_255_255/0.7)]">
        高德地图
      </span>
    </div>
  );
}

function StatusBar() {
  return (
    <div className="grid h-[194px] grid-cols-[1fr_376px_1fr] items-start text-white">
      <div className="flex justify-center pt-[65px] pl-7">
        <span className="text-[54px] leading-[66px] font-semibold">15:29</span>
      </div>
      <div className="mt-[41px] h-[111px] rounded-full bg-black" />
      <div className="flex items-center justify-end gap-[22px] pt-[74px] pr-[121px]">
        <svg viewBox="0 0 66 44" className="h-11 w-[66px]" aria-hidden="true">
          <g fill="#fff" fillOpacity="0.220">
            <rect x="0" y="32" width="12" height="11" rx="4" />
            <rect x="18" y="32" width="12" height="11" rx="4" />
            <rect x="36" y="32" width="12" height="11" rx="4" />
            <rect x="54" y="32" width="12" height="11" rx="4" />
          </g>
        </svg>
        <svg viewBox="0 0 58 44" className="h-11 w-[58px]" aria-hidden="true">
          <g fill="#fff">
            <path d="M29 1C40 1 50 5.500 57 12.500q1 1 0 2l-3.500 3.500q-1 1-2 0C45.500 12.500 37.500 9.500 29 9.500S12.500 12.500 6.500 18q-1 1-2 0L1 14.500q-1-1 0-2C8 5.500 18 1 29 1z" />
            <path d="M29 15.500c7 0 13.500 2.700 18.300 7.200q1 1 0 2l-3.500 3.500q-1 1-2 0C38.300 25.500 34 23.500 29 23.500s-9.300 2-12.800 4.700q-1 1-2 0l-3.500-3.500q-1-1 0-2C15.500 18.200 22 15.500 29 15.500z" />
            <path d="M29 29.500c3.400 0 6.400 1.200 8.700 3.200q1 1 0 2l-7.700 8q-1 1-2 0l-7.700-8q-1-1 0-2c2.300-2 5.300-3.200 8.700-3.200z" />
          </g>
        </svg>
        <svg viewBox="0 0 94 44" className="h-11 w-[94px]" aria-hidden="true">
          <rect x="1.500" y="1.500" width="83" height="41" rx="13" fill="none" stroke="#fff" strokeOpacity="0.400" strokeWidth="3" />
          <rect x="7" y="7" width="72" height="30" rx="9" fill="#fff" />
          <path d="M88 15c3 1 5 4 5 7s-2 6-5 7z" fill="#fff" fillOpacity="0.500" />
        </svg>
      </div>
    </div>
  );
}

export default function App() {
  return (
    <div className="relative min-h-screen bg-white font-[Inter,'Noto_Sans_CJK_SC',sans-serif]">
      <header className="bg-[#4b5470]">
        <StatusBar />
        <div className="grid h-[124px] grid-cols-3 items-center px-[60px] pb-[6px] text-white">
          <button type="button" aria-label="关闭" className="size-[60px]">
            <svg viewBox="0 0 60 60" className="size-[60px]" aria-hidden="true">
              <path d="M9 9l42 42M51 9L9 51" stroke="currentColor" strokeWidth="5" strokeLinecap="round" />
            </svg>
          </button>
          <h1 className="text-center text-[57px] leading-[72px] font-medium">图片详情</h1>
        </div>
      </header>

      <MapPanel />

      <main className="px-[60px]">
        {sections.map((section) => (
          <section key={section.title} className="pt-[76px]">
            <h2 className="mb-2 text-[44px] leading-[66px] font-medium text-[#8a8a8e]">{section.title}</h2>
            <dl>
              {section.rows.map(([label, value]) => (
                <div key={label} className="flex h-[132px] items-center justify-between">
                  <dt className="text-[44px] text-[#7d7977]">{label}</dt>
                  <dd className={`font-medium text-[#4b5470] ${section.valueSize}`}>{value}</dd>
                </div>
              ))}
            </dl>
          </section>
        ))}
      </main>

      <div className="fixed bottom-6 left-1/2 h-[15px] w-[471px] -translate-x-1/2 rounded-full bg-linear-to-b from-[#535353] to-[#7f7f7f]" />
    </div>
  );
}
